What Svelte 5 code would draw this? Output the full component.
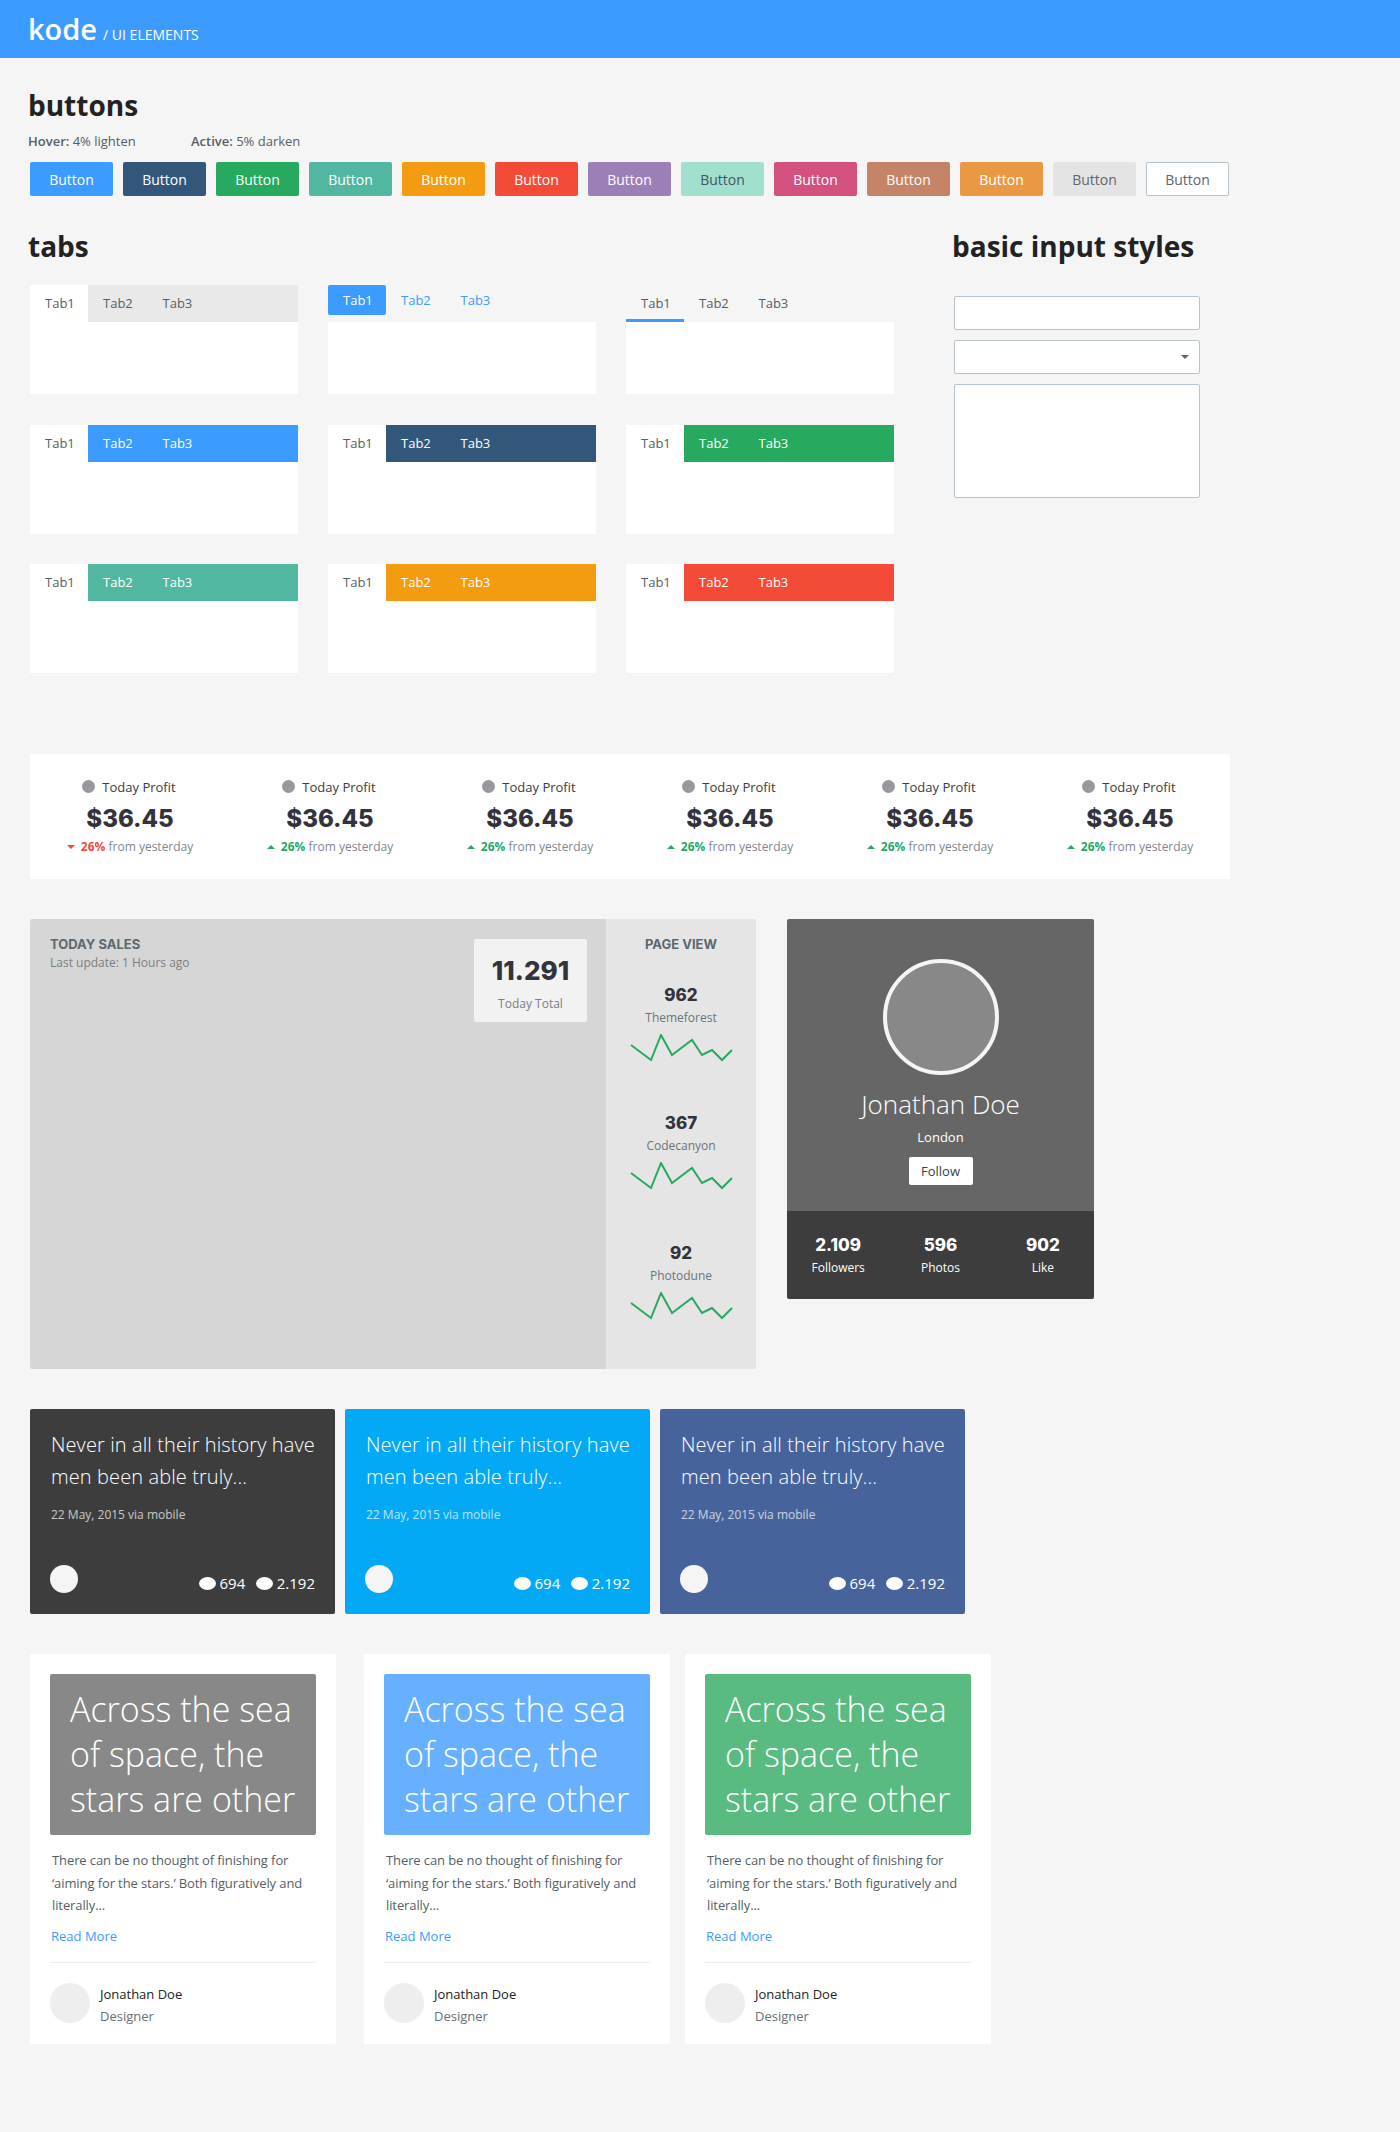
<script>
  const buttons = [
    ['#3b9bff', '#fff'], ['#33577b', '#fff'], ['#27a95f', '#fff'], ['#52b7a1', '#fff'],
    ['#f39c12', '#fff'], ['#f34b38', '#fff'], ['#9b80b8', '#fff'], ['#a1e0cf', '#46545e'],
    ['#d2517f', '#fff'], ['#c58467', '#fff'], ['#e99943', '#fff'], ['#e4e4e4', '#5c666e']
  ];
  const tabColors = ['#3b9bff', '#33577b', '#27a95f', '#52b7a1', '#f39c12', '#f34b38'];
  const stats = [false, true, true, true, true, true];
  const views = [
    { value: '962', label: 'Themeforest' },
    { value: '367', label: 'Codecanyon' },
    { value: '92', label: 'Photodune' }
  ];
  const profile = [
    { value: '2.109', label: 'Followers' },
    { value: '596', label: 'Photos' },
    { value: '902', label: 'Like' }
  ];
  const tweets = ['#3d3d3d', '#04a9f5', '#47639c'];
  const posts = ['#888888', '#66b0ff', '#59bb7f'];
  const spark = '1,11 21,26 31,1 42,21 62,6 72,21 82,16 92,26 102,16';
</script>

<header class="topbar">
  <span class="logo">kode</span>
  <span class="crumb">/ UI ELEMENTS</span>
</header>

<main>
  <h2>buttons</h2>
  <div class="hints">
    <span><b>Hover:</b> 4% lighten</span>
    <span><b>Active:</b> 5% darken</span>
  </div>
  <div class="btn-row">
    {#each buttons as [bg, fg]}
      <button class="btn" style="background:{bg};color:{fg}">Button</button>
    {/each}
    <button class="btn outline">Button</button>
  </div>

  <div class="split">
    <section class="tabs-col">
      <h2>tabs</h2>
      <div class="tab-grid">
        <div class="tabs plain">
          <div class="tab-head">
            <span class="tab on">Tab1</span><span class="tab">Tab2</span><span class="tab">Tab3</span>
          </div>
          <div class="tab-body"></div>
        </div>
        <div class="tabs pill">
          <div class="tab-head">
            <span class="tab on">Tab1</span><span class="tab">Tab2</span><span class="tab">Tab3</span>
          </div>
          <div class="tab-body"></div>
        </div>
        <div class="tabs line">
          <div class="tab-head">
            <span class="tab on">Tab1</span><span class="tab">Tab2</span><span class="tab">Tab3</span>
          </div>
          <div class="tab-body"></div>
        </div>
        {#each tabColors as color}
          <div class="tabs colored">
            <div class="tab-head" style="background:{color}">
              <span class="tab on">Tab1</span><span class="tab">Tab2</span><span class="tab">Tab3</span>
            </div>
            <div class="tab-body"></div>
          </div>
        {/each}
      </div>
    </section>

    <section class="inputs-col">
      <h2>basic input styles</h2>
      <div class="fields">
        <input type="text" />
        <div class="select"><i class="caret"></i></div>
        <textarea></textarea>
      </div>
    </section>
  </div>

  <div class="stats">
    {#each stats as up}
      <div class="stat">
        <div class="stat-title"><i class="dot"></i>Today Profit</div>
        <div class="stat-value">$36.45</div>
        <div class="stat-note">
          <i class={up ? 'tri up' : 'tri down'}></i>
          <b class={up ? 'good' : 'bad'}>26%</b> from yesterday
        </div>
      </div>
    {/each}
  </div>

  <div class="widgets">
    <div class="sales">
      <div class="sales-main">
        <div>
          <div class="caps">TODAY SALES</div>
          <div class="updated">Last update: 1 Hours ago</div>
        </div>
        <div class="total">
          <strong>11.291</strong>
          <span>Today Total</span>
        </div>
      </div>
      <div class="sales-side">
        <div class="caps">PAGE VIEW</div>
        {#each views as view}
          <div class="view">
            <strong>{view.value}</strong>
            <span>{view.label}</span>
            <svg width="103" height="28" viewBox="0 0 103 28">
              <polyline points={spark} fill="none" stroke="#27a95f" stroke-width="2" />
            </svg>
          </div>
        {/each}
      </div>
    </div>

    <div class="profile">
      <div class="profile-top">
        <div class="avatar"></div>
        <div class="name">Jonathan Doe</div>
        <div class="city">London</div>
        <button class="follow">Follow</button>
      </div>
      <div class="profile-bottom">
        {#each profile as item}
          <div>
            <strong>{item.value}</strong>
            <span>{item.label}</span>
          </div>
        {/each}
      </div>
    </div>
  </div>

  <div class="tweets">
    {#each tweets as color}
      <article class="tweet" style="background:{color}">
        <p>Never in all their history have men been able truly...</p>
        <small>22 May, 2015 via mobile</small>
        <div class="tweet-foot">
          <i class="face"></i>
          <div class="counts">
            <i class="blob"></i><span>694</span>
            <i class="blob"></i><span>2.192</span>
          </div>
        </div>
      </article>
    {/each}
  </div>

  <div class="posts">
    {#each posts as color}
      <article class="post">
        <div class="hero" style="background:{color}">Across the sea of space, the stars are other</div>
        <p>There can be no thought of finishing for ‘aiming for the stars.’ Both figuratively and literally...</p>
        <a href="#top">Read More</a>
        <div class="author">
          <i class="author-pic"></i>
          <div>
            <div class="author-name">Jonathan Doe</div>
            <div class="author-role">Designer</div>
          </div>
        </div>
      </article>
    {/each}
  </div>
</main>

<style>
  :global(body) {
    background: #f5f5f5;
    font-family: "Open Sans", "Liberation Sans", sans-serif;
    color: #555e66;
    min-height: 2132px;
  }
  .topbar {
    height: 58px;
    background: #3b9bff;
    color: #fff;
    padding-left: 28px;
    display: flex;
    align-items: baseline;
    gap: 7px;
    box-sizing: border-box;
    line-height: 58px;
  }
  .logo { font-size: 29px; font-weight: 600; }
  .crumb { font-size: 14px; margin-left: -1px; }
  main { padding-left: 30px; }
  h2 {
    margin: 0 0 0 -2px;
    font-size: 28px;
    line-height: 38px;
    font-weight: 700;
    color: #222;
  }
  main > h2 { padding-top: 28px; }
  .hints {
    margin-top: 8px;
    height: 18px;
    line-height: 18px;
    font-size: 13px;
    margin-left: -2px;
    display: flex;
  }
  .hints span:first-child { width: 163px; }
  .hints b { font-weight: 600; }
  .btn-row {
    display: flex;
    gap: 10px;
    margin-top: 12px;
  }
  .btn {
    width: 83px;
    height: 34px;
    border: 0;
    border-radius: 2px;
    font: 14px "Open Sans", sans-serif;
    padding: 0;
  }
  .outline {
    background: #fff;
    border: 1px solid #b9c3cc;
    color: #5c666e;
  }
  .split {
    display: flex;
    margin-top: 31px;
  }
  .tabs-col { width: 864px; }
  .tab-grid {
    display: grid;
    grid-template-columns: repeat(3, 268px);
    column-gap: 30px;
    row-gap: 30.5px;
    margin-top: 20px;
  }
  .tab-head {
    height: 37px;
    display: flex;
    font-size: 13px;
    line-height: 37px;
  }
  .tab {
    padding: 0 15px;
    width: 28px;
    text-align: center;
    box-sizing: content-box;
  }
  .tab + .tab + .tab { margin-left: 1.5px; }
  .tab-body { height: 72px; background: #fff; }
  .plain .tab-head { background: #e9e9e9; }
  .plain .on, .colored .on { background: #fff; }
  .colored .tab:not(.on) { color: #fff; }
  .pill .tab-head { line-height: 30px; }
  .pill .tab { height: 30px; color: #3b9bff; }
  .pill .on { background: #3b9bff; color: #fff; border-radius: 2px; }
  .line .on { border-bottom: 3px solid #3b9bff; height: 34px; }
  .inputs-col { margin-left: 60px; }
  .fields {
    margin-top: 31px;
    width: 246px;
    display: flex;
    flex-direction: column;
    gap: 10px;
  }
  input, .select, textarea {
    display: block;
    width: 246px;
    height: 34px;
    box-sizing: border-box;
    border: 1px solid #b9c3cc;
    border-radius: 2px;
    background: #fff;
    margin: 0;
    padding: 0;
    resize: none;
    outline: none;
  }
  textarea { height: 114px; }
  .select { position: relative; }
  .caret {
    position: absolute;
    right: 10px;
    top: 14px;
    border-left: 4px solid transparent;
    border-right: 4px solid transparent;
    border-top: 4px solid #5c666e;
  }
  .stats {
    margin-top: 81px;
    width: 1200px;
    height: 125px;
    background: #fff;
    border-radius: 2px;
    display: grid;
    grid-template-columns: repeat(6, 200px);
    text-align: center;
  }
  .stat { padding-top: 23px; }
  .stat-title {
    font-size: 13px;
    line-height: 20px;
    color: #3a3a44;
    margin-left: -2px;
  }
  .dot {
    display: inline-block;
    width: 13px;
    height: 13px;
    border-radius: 50%;
    background: #98989e;
    margin-right: 7px;
    vertical-align: -1px;
  }
  .stat-value {
    font-family: Inter, "Liberation Sans", sans-serif;
    font-weight: 800;
    font-size: 24px;
    line-height: 36px;
    color: #33333d;
    margin-top: 4px;
  }
  .stat-note {
    font-size: 12px;
    line-height: 18px;
    color: #85858d;
    margin-top: 1px;
  }
  .stat-note b { font-weight: 700; }
  .good { color: #27a95f; }
  .bad { color: #f44a39; }
  .tri {
    display: inline-block;
    border-left: 4px solid transparent;
    border-right: 4px solid transparent;
    margin-right: 3px;
    vertical-align: 2px;
  }
  .up { border-bottom: 4px solid #27a95f; }
  .down { border-top: 4px solid #f44a39; }
  .widgets {
    margin-top: 40px;
    display: flex;
    align-items: flex-start;
    gap: 31px;
  }
  .sales {
    width: 726px;
    height: 450px;
    display: flex;
    border-radius: 2px;
    overflow: hidden;
  }
  .sales-main {
    width: 576px;
    background: #d6d6d6;
    display: flex;
    justify-content: space-between;
    align-items: flex-start;
    padding: 17px 19px 0 20px;
    box-sizing: border-box;
  }
  .caps {
    font-family: Inter, "Liberation Sans", sans-serif;
    font-size: 13px;
    line-height: 16px;
    font-weight: 700;
    color: #5b6870;
  }
  .updated {
    font-size: 12px;
    line-height: 20px;
    color: #7d7d82;
    margin-top: 1px;
  }
  .total {
    width: 113px;
    height: 83px;
    background: #f2f2f2;
    border-radius: 2px;
    text-align: center;
    padding-top: 15px;
    box-sizing: border-box;
    margin-top: 3px;
  }
  .total strong, .view strong, .profile-bottom strong {
    display: block;
    font-family: Inter, "Liberation Sans", sans-serif;
    font-weight: 800;
    color: #33333d;
  }
  .total strong { font-size: 26px; line-height: 34px; }
  .total span {
    display: block;
    font-size: 12px;
    line-height: 18px;
    color: #7d7d82;
    margin-top: 7px;
  }
  .sales-side {
    width: 150px;
    background: #e5e5e5;
    text-align: center;
    padding-top: 17px;
    box-sizing: border-box;
  }
  .view {
    height: 128px;
    padding-top: 30.5px;
    box-sizing: border-box;
  }
  .view:last-child { margin-top: 2px; }
  .view strong { font-size: 17px; line-height: 24px; }
  .view span {
    display: block;
    font-size: 12px;
    line-height: 18px;
    color: #6b747b;
    margin-top: 2px;
  }
  .view svg { display: block; margin: 7.5px auto 0; }
  .profile {
    width: 307px;
    border-radius: 2px;
    overflow: hidden;
    color: #fff;
    text-align: center;
  }
  .profile-top {
    height: 292px;
    background: #666;
    padding-top: 40px;
    box-sizing: border-box;
  }
  .avatar {
    width: 116px;
    height: 116px;
    box-sizing: border-box;
    border: 4px solid #f5f5f5;
    border-radius: 50%;
    background: #888;
    margin: 0 auto;
  }
  .name { font-size: 26px; font-weight: 300; line-height: 38px; margin-top: 10px; }
  .city { font-size: 13px; line-height: 20px; margin-top: 4px; }
  .follow {
    width: 64px;
    height: 28px;
    margin-top: 10px;
    background: #fff;
    border: 0;
    border-radius: 2px;
    padding: 0;
    font: 13px "Open Sans", sans-serif;
    color: #3d3d3d;
  }
  .profile-bottom {
    height: 88px;
    background: #3d3d3d;
    display: grid;
    grid-template-columns: repeat(3, 1fr);
    padding: 23px 0 0;
    box-sizing: border-box;
  }
  .profile-bottom strong { color: #fff; font-size: 17px; line-height: 22px; }
  .profile-bottom span { display: block; font-size: 12px; line-height: 18px; margin-top: 3px; }
  .tweets {
    margin-top: 40px;
    display: flex;
    gap: 10px;
  }
  .tweet {
    width: 305px;
    height: 205px;
    border-radius: 2px;
    color: #fff;
    padding: 20px 20px 0;
    box-sizing: border-box;
    display: flex;
    flex-direction: column;
  }
  .tweet p {
    margin: 0 0 0 1px;
    font-size: 20px;
    letter-spacing: 0.1px;
    line-height: 32px;
    font-weight: 300;
  }
  .tweet small {
    font-size: 12px;
    line-height: 20px;
    margin: 12px 0 0 1px;
    opacity: 0.7;
  }
  .tweet-foot {
    display: flex;
    justify-content: space-between;
    margin-top: 40px;
  }
  .face {
    width: 28px;
    height: 28px;
    border-radius: 50%;
    background: #f5f5f5;
  }
  .counts {
    display: flex;
    align-items: center;
    font-size: 15px;
    height: 28px;
    padding-top: 8px;
    box-sizing: border-box;
  }
  .counts span { margin: 0 10.5px 0 4px; }
  .counts span:last-child { margin-right: 0; }
  .blob {
    width: 17px;
    height: 13px;
    background: #fff;
    border-radius: 50%;
  }
  .posts {
    margin-top: 40px;
    display: flex;
  }
  .post {
    width: 306px;
    height: 390px;
    background: #fff;
    border-radius: 2px;
    padding: 20px 20px 0;
    box-sizing: border-box;
    margin-right: 28px;
  }
  .post:nth-child(2) { margin-right: 15px; }
  .hero {
    height: 161px;
    border-radius: 2px;
    color: #fff;
    font-size: 34px;
    font-weight: 300;
    line-height: 45px;
    padding: 13px 0 0 20px;
    box-sizing: border-box;
  }
  .post p {
    margin: 14px 0 0 2px;
    font-size: 13px;
    letter-spacing: -0.1px;
    line-height: 22.5px;
    color: #555e66;
  }
  .post a {
    display: block;
    margin: 9px 0 0 1px;
    font-size: 13px;
    line-height: 20px;
    color: #3b9bff;
    text-decoration: none;
  }
  .author {
    margin-top: 16px;
    border-top: 1px solid #ececec;
    padding-top: 20px;
    display: flex;
    gap: 10px;
  }
  .author-pic {
    width: 40px;
    height: 40px;
    border-radius: 50%;
    background: #eee;
  }
  .author-name { font-size: 13px; line-height: 22px; color: #222; }
  .author-role { font-size: 13px; line-height: 22px; color: #666f76; }
</style>
